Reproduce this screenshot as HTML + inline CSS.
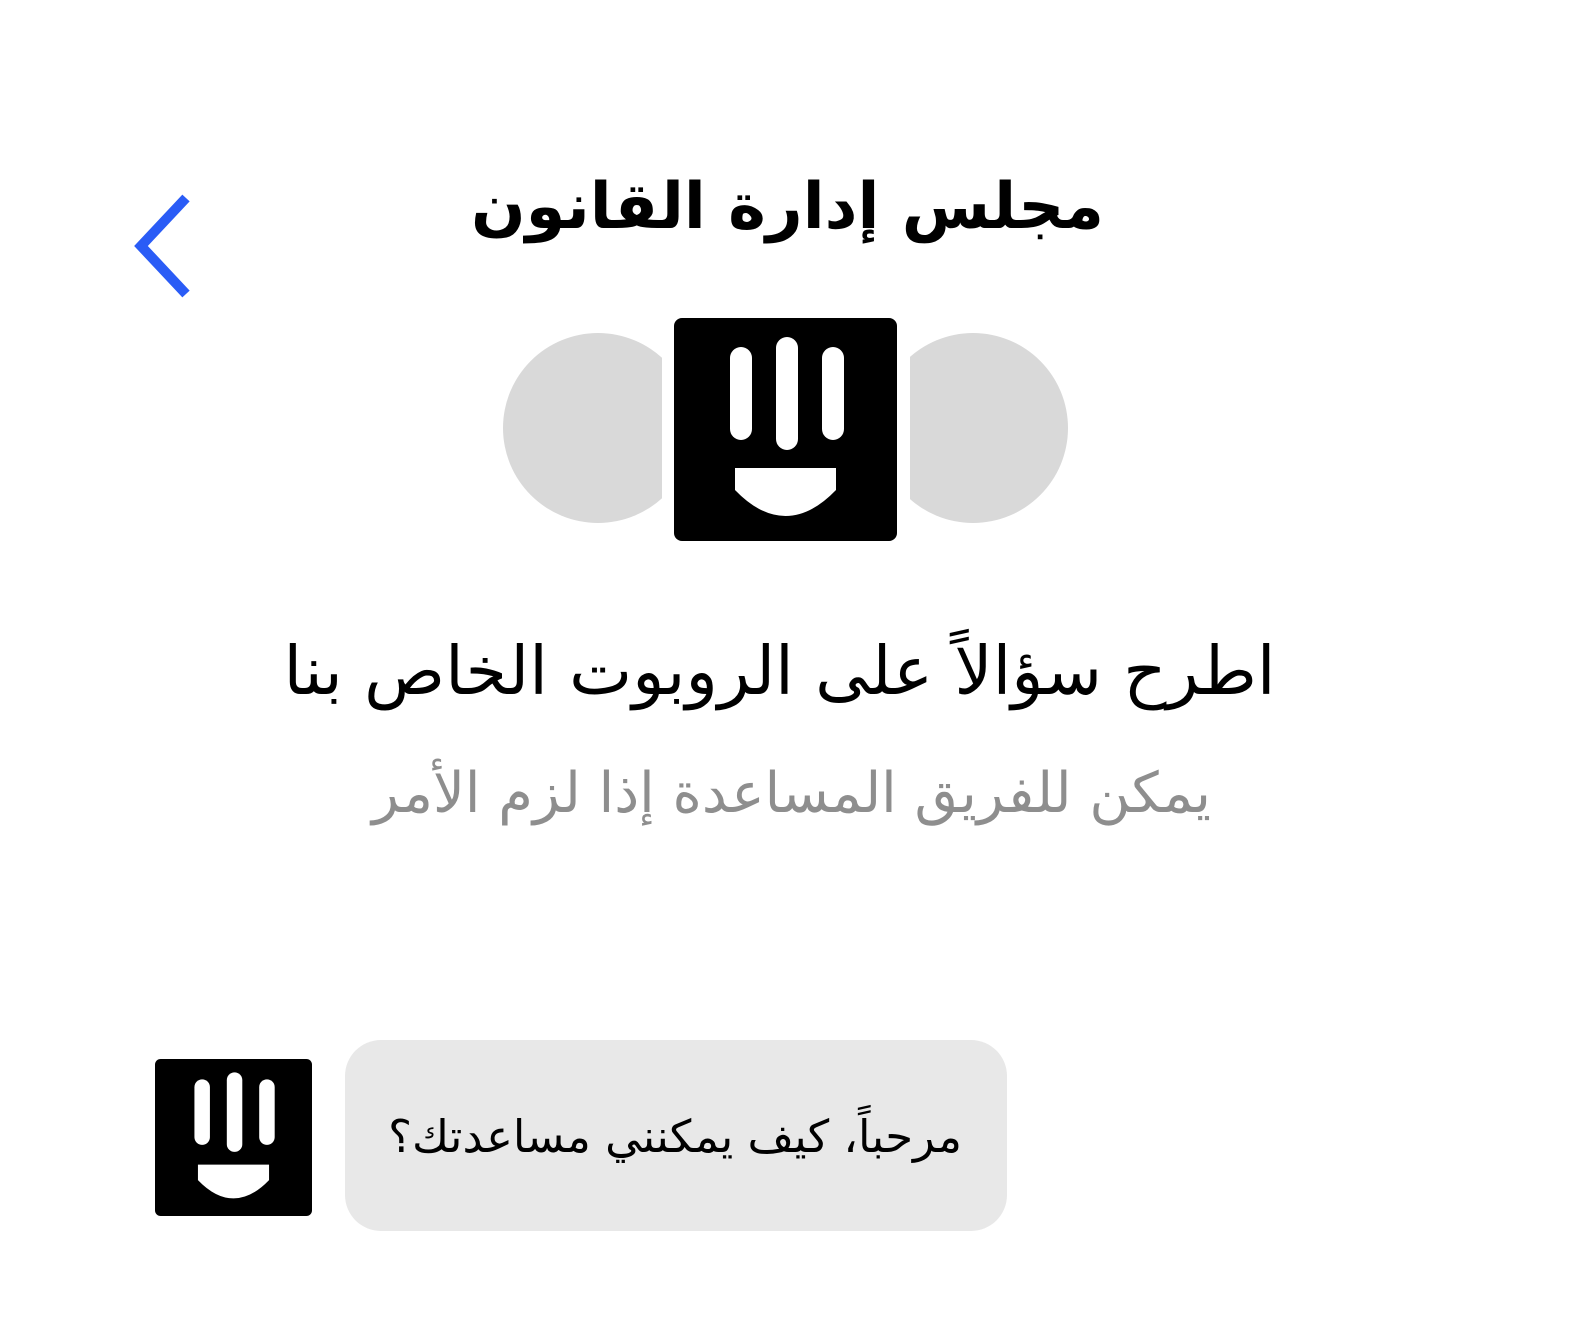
<!DOCTYPE html>
<html><head><meta charset="utf-8"><style>
body{margin:0;width:1583px;height:1342px;background:#fff;position:relative;overflow:hidden;font-family:"DejaVu Sans","Liberation Sans",sans-serif;}
.abs{position:absolute}
.t{position:absolute;left:0;width:1583px;text-align:center;direction:rtl;white-space:nowrap}
</style></head><body>
<svg class="abs" style="left:130px;top:190px" width="70" height="115" viewBox="0 0 70 115"><path d="M56 8 L11 56 L56 104" fill="none" stroke="#2a5cf6" stroke-width="10"/></svg>
<div class="t" style="top:170px;font-size:64px;font-weight:bold;color:#000;left:-4px">مجلس إدارة القانون</div>
<div class="abs" style="left:503px;top:333px;width:190px;height:190px;border-radius:50%;background:#d9d9d9;clip-path:inset(0 31px 0 0)"></div>
<div class="abs" style="left:878px;top:333px;width:190px;height:190px;border-radius:50%;background:#d9d9d9;clip-path:inset(0 0 0 32px)"></div>
<svg class="abs" style="left:674px;top:318px" width="223" height="223" viewBox="0 0 223 223">
<rect width="223" height="223" rx="8" fill="#000"/>
<rect x="56" y="29" width="22" height="93" rx="11" fill="#fff"/>
<rect x="102" y="19" width="22" height="113" rx="11" fill="#fff"/>
<rect x="148" y="29" width="22" height="93" rx="11" fill="#fff"/>
<path d="M61 150 H162 V172 Q137 198 111.5 198 Q86 198 61 172 Z" fill="#fff"/>
</svg>
<div class="t" style="top:632px;font-size:67px;color:#000;left:-12px">اطرح سؤالاً على الروبوت الخاص بنا</div>
<div class="t" style="top:761px;font-size:56px;color:#8e8e8e;left:0">يمكن للفريق المساعدة إذا لزم الأمر</div>
<svg class="abs" style="left:155px;top:1059px" width="157" height="157" viewBox="0 0 223 223">
<rect width="223" height="223" rx="8" fill="#000"/>
<rect x="56" y="29" width="22" height="93" rx="11" fill="#fff"/>
<rect x="102" y="19" width="22" height="113" rx="11" fill="#fff"/>
<rect x="148" y="29" width="22" height="93" rx="11" fill="#fff"/>
<path d="M61 150 H162 V172 Q137 198 111.5 198 Q86 198 61 172 Z" fill="#fff"/>
</svg>
<div class="abs" style="left:345px;top:1040px;width:662px;height:191px;border-radius:36px;background:#e8e8e8"></div>
<div class="abs" style="left:345px;top:1110px;width:617px;text-align:right;direction:rtl;font-size:45px;color:#000;white-space:nowrap">مرحباً، كيف يمكنني مساعدتك؟</div>
</body></html>
